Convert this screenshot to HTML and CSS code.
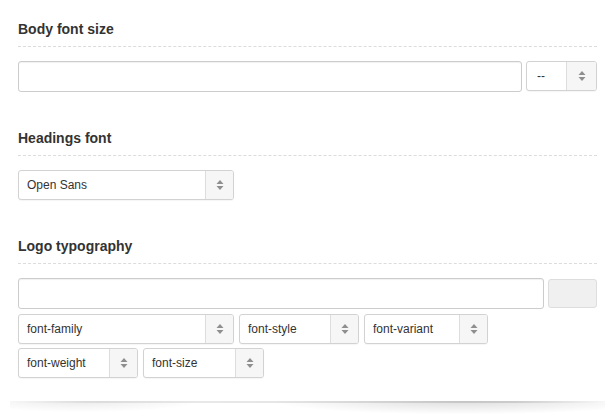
FILE: index.html
```html
<!doctype html>
<html lang="en">
<head>
    <meta charset="utf-8">
    <title>Typography settings</title>
    <link rel="stylesheet" href="styles.css">
</head>
<body>
    <div class="panel">
        <section class="field">
            <h3 class="field-title">Body font size</h3>
            <div class="row">
                <input class="text-input grow" type="text">
                <div class="select select-unit">
                    <span class="select-value">--</span>
                    <span class="select-arrow"><svg width="8" height="10" viewBox="0 0 8 10"><path d="M4 0L7.5 4H0.5Z M0.5 6H7.5L4 10Z"/></svg></span>
                </div>
            </div>
        </section>

        <section class="field">
            <h3 class="field-title">Headings font</h3>
            <div class="row">
                <div class="select select-wide">
                    <span class="select-value">Open Sans</span>
                    <span class="select-arrow"><svg width="8" height="10" viewBox="0 0 8 10"><path d="M4 0L7.5 4H0.5Z M0.5 6H7.5L4 10Z"/></svg></span>
                </div>
            </div>
        </section>

        <section class="field">
            <h3 class="field-title">Logo typography</h3>
            <div class="row row-logo">
                <input class="text-input grow" type="text">
                <button class="color-button" type="button"></button>
            </div>
            <div class="row row-selects">
                <div class="select select-wide">
                    <span class="select-value">font-family</span>
                    <span class="select-arrow"><svg width="8" height="10" viewBox="0 0 8 10"><path d="M4 0L7.5 4H0.5Z M0.5 6H7.5L4 10Z"/></svg></span>
                </div>
                <div class="select select-style">
                    <span class="select-value">font-style</span>
                    <span class="select-arrow"><svg width="8" height="10" viewBox="0 0 8 10"><path d="M4 0L7.5 4H0.5Z M0.5 6H7.5L4 10Z"/></svg></span>
                </div>
                <div class="select select-variant">
                    <span class="select-value">font-variant</span>
                    <span class="select-arrow"><svg width="8" height="10" viewBox="0 0 8 10"><path d="M4 0L7.5 4H0.5Z M0.5 6H7.5L4 10Z"/></svg></span>
                </div>
            </div>
            <div class="row row-selects">
                <div class="select select-weight">
                    <span class="select-value">font-weight</span>
                    <span class="select-arrow"><svg width="8" height="10" viewBox="0 0 8 10"><path d="M4 0L7.5 4H0.5Z M0.5 6H7.5L4 10Z"/></svg></span>
                </div>
                <div class="select select-size">
                    <span class="select-value">font-size</span>
                    <span class="select-arrow"><svg width="8" height="10" viewBox="0 0 8 10"><path d="M4 0L7.5 4H0.5Z M0.5 6H7.5L4 10Z"/></svg></span>
                </div>
            </div>
        </section>
    </div>
    <div class="panel-shadow"></div>
</body>
</html>
```

FILE: styles.css
```css
* {
    box-sizing: border-box;
}
html,
body {
    overflow: hidden;
}
body {
    margin: 0;
    padding: 0;
    background-color: #fff;
    font-family: "Liberation Sans", Arial, sans-serif;
    color: #333;
}
.panel {
    width: 595px;
    margin: 0 10px;
    padding: 19px 8px 23px;
    background-color: #fff;
}
/* curved drop shadow under the panel */
.panel-shadow {
    width: 595px;
    height: 15px;
    margin: 0 10px;
    background:
        linear-gradient(to right, rgba(0, 0, 0, 0) 0%, rgba(0, 0, 0, 0.08) 15%, rgba(0, 0, 0, 0.1) 50%, rgba(0, 0, 0, 0.12) 85%, rgba(0, 0, 0, 0) 100%) top / 100% 2px no-repeat,
        radial-gradient(ellipse 32% 90% at 76% 0, rgba(0, 0, 0, 0.13), rgba(0, 0, 0, 0) 100%),
        radial-gradient(ellipse 20% 75% at 12% 0, rgba(0, 0, 0, 0.08), rgba(0, 0, 0, 0) 100%);
}
.field {
    margin-bottom: 36px;
}
.field:last-child {
    margin-bottom: 0;
}
.field-title {
    margin: 0 0 14px;
    padding-bottom: 7px;
    font-size: 14px;
    line-height: 20px;
    font-weight: bold;
    color: #333;
    border-bottom: 1px dashed #dcdcdc;
}
.row {
    display: flex;
    align-items: flex-start;
    gap: 4px;
}
.row-logo {
    align-items: center;
    margin-bottom: 5px;
}
.row-selects {
    gap: 5px;
    margin-bottom: 4px;
}
.row-selects:last-child {
    margin-bottom: 0;
}
.grow {
    flex: 1;
}
.text-input {
    height: 31px;
    margin: 0;
    padding: 0 8px;
    border: 1px solid #ccc;
    border-radius: 3px;
    background: #fff;
    box-shadow: inset 0 1px 1px rgba(0, 0, 0, 0.06);
    font: 12px "Liberation Sans", Arial, sans-serif;
}
.color-button {
    width: 49px;
    height: 29px;
    margin: 0;
    padding: 0;
    border: 1px solid #ddd;
    border-radius: 3px;
    background-color: #f0f0f0;
}
.select {
    display: flex;
    height: 30px;
    border: 1px solid #d2d2d2;
    border-radius: 3px;
    background-color: #fff;
    box-shadow: 0 1px 1px rgba(0, 0, 0, 0.04);
    font-size: 12px;
    color: #333;
}
.select-value {
    flex: 1;
    display: flex;
    align-items: center;
    padding-left: 8px;
    white-space: nowrap;
}
.select-arrow {
    display: flex;
    align-items: center;
    justify-content: center;
    width: 28px;
    border-left: 1px solid #ddd;
    border-radius: 0 2px 2px 0;
    background-color: #f6f6f6;
}
.select-arrow svg {
    fill: #8f8f8f;
}
.select-unit {
    width: 71px;
}
.select-unit .select-value {
    padding-left: 10px;
}
.select-unit .select-arrow {
    width: 30px;
}
.select-wide {
    width: 216px;
}
.select-style {
    width: 120px;
}
.select-variant {
    width: 124px;
}
.select-weight {
    width: 120px;
}
.select-size {
    width: 121px;
}
```
